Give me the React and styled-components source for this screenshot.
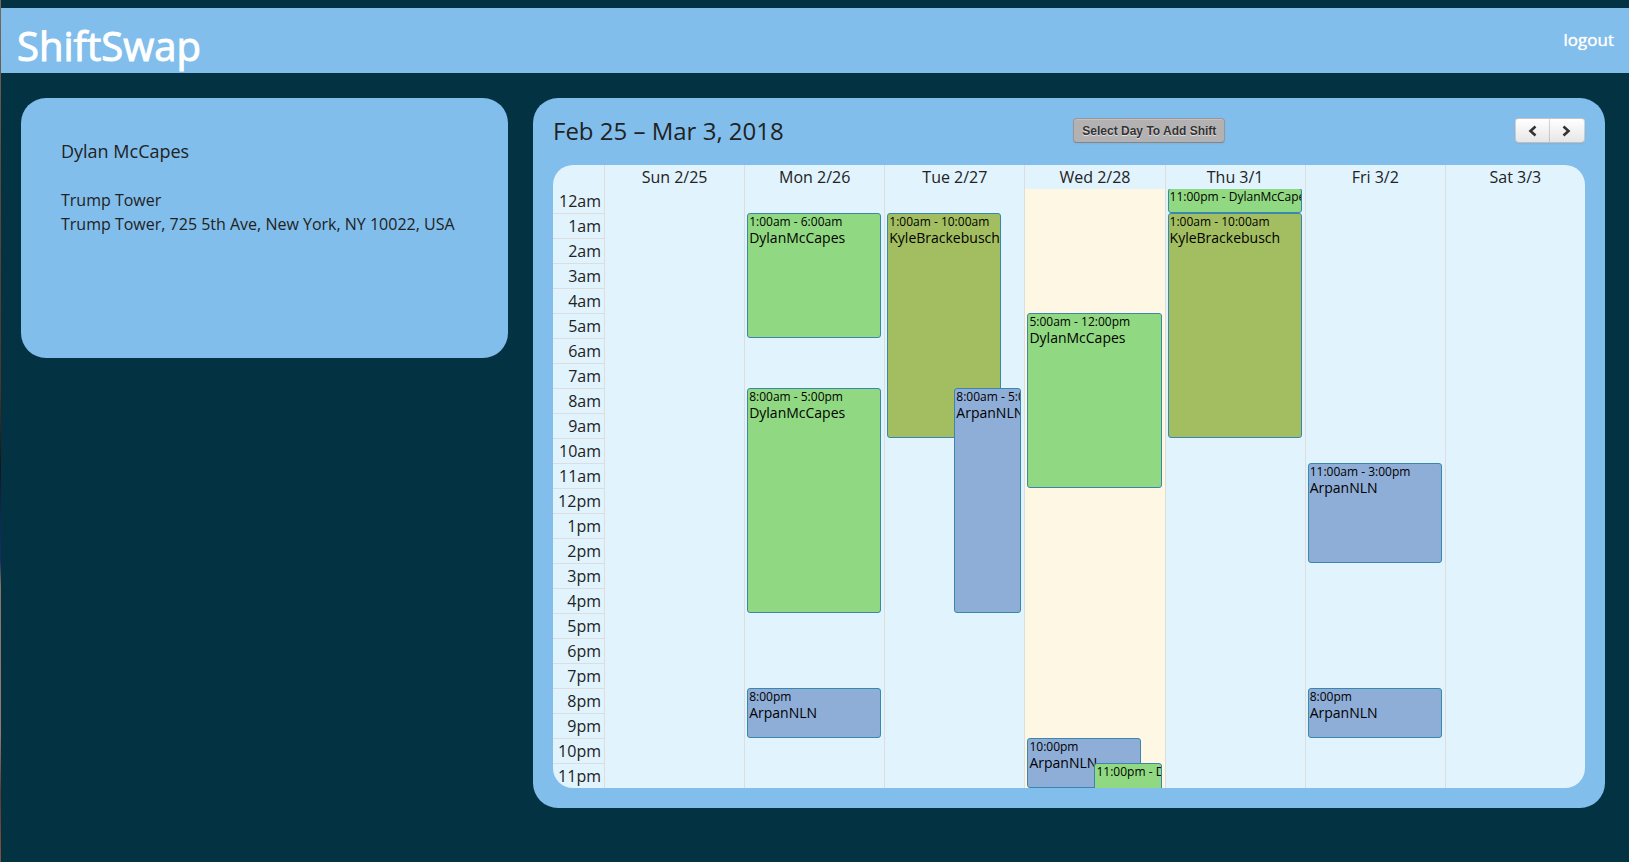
import React from "react";
import styled, { createGlobalStyle } from "styled-components";

const HOUR = 25;

const colors = {
  page: "#033242",
  panel: "#81beec",
  grid: "#e1f3fd",
  today: "#fef7e3",
  line: "#dddddd",
  text: "#222222",
  dylan: "#90d982",
  kyle: "#a3be60",
  arpan: "#8eadd7",
};

const GlobalStyle = createGlobalStyle`
  *, *::before, *::after { box-sizing: border-box; }
  body {
    margin: 0;
    background: ${colors.page};
    color: ${colors.text};
    font: 16px/24px "Open Sans", "Noto Sans", sans-serif;
  }
`;

const Page = styled.div`
  min-height: 100vh;
  padding-top: 8px;
  border-left: 1px solid;
  border-image: linear-gradient(
    #77695c, #5d4a3e 20%, #4b3528 45%, #15151a 54%, #14265a 60%, #1a2a66 65%,
    #8a7465 68%, #9a7a68 85%, #5a3a30 92%, #84523f
  ) 1;
`;

const Header = styled.header`
  display: flex;
  align-items: center;
  justify-content: space-between;
  height: 65px;
  padding: 0 15px 2px 16px;
  background: ${colors.panel};
  color: #ffffff;
`;

const Brand = styled.h1`
  margin: 12px 0 0;
  font-size: 40px;
  line-height: 48px;
  font-weight: 400;
  -webkit-text-stroke: 1px #ffffff;
`;

const LogoutLink = styled.a`
  color: inherit;
  font-size: 17px;
  text-decoration: none;
  text-shadow: 0 0 1px #ffffff;
`;

const Main = styled.main`
  display: grid;
  grid-template-columns: 487fr 1072fr;
  align-items: start;
  gap: 25px;
  padding: 25px 24px 54px 20px;
`;

const Panel = styled.section`
  min-width: 0;
  border-radius: 25px;
  background: ${colors.panel};
`;

const ProfilePanel = styled(Panel)`
  min-height: 260px;
  padding: 41px 40px;
`;

const ProfileName = styled.h2`
  margin: 0 0 24px;
  font-size: 18px;
  line-height: 25px;
  font-weight: 400;
`;

const ProfileLine = styled.p`
  margin: 0;
`;

const CalendarPanel = styled(Panel)`
  padding: 20px;
`;

const Toolbar = styled.div`
  display: flex;
  align-items: flex-start;
  justify-content: space-between;
  height: 47px;
`;

const RangeTitle = styled.h2`
  margin: 0;
  font-size: 24px;
  line-height: 26px;
  font-weight: 400;
`;

const ToolButton = styled.button`
  display: inline-flex;
  align-items: center;
  justify-content: center;
  height: 25px;
  padding: 0 8px;
  border: 1px solid rgba(0, 0, 0, 0.15);
  border-bottom-color: rgba(0, 0, 0, 0.25);
  border-radius: 4px;
  background: ${(p) => (p.$muted ? "#b3b1b2" : "linear-gradient(#ffffff, #e6e6e6)")};
  color: #333333;
  font: bold 12px/16px "Liberation Sans", Arial, sans-serif;
  text-shadow: 0 1px 1px rgba(255, 255, 255, 0.75);
  box-shadow: inset 0 1px 0 rgba(255, 255, 255, 0.2), 0 1px 2px rgba(0, 0, 0, 0.05);
  cursor: pointer;
`;

const NavGroup = styled.div`
  display: flex;
`;

const NavButton = styled(ToolButton)`
  width: 36px;
  padding: 0;

  &:first-child { width: 35px; border-radius: 4px 0 0 4px; }
  &:last-child { margin-left: -1px; border-radius: 0 4px 4px 0; }
`;

const Calendar = styled.div`
  display: grid;
  grid-template-columns: 51px minmax(0, 1fr);
  overflow: hidden;
  border-radius: 20px;
  background: ${colors.grid};
`;

const Axis = styled.div`
  padding-top: 24px;
`;

const AxisSlot = styled.div`
  height: ${HOUR}px;
  padding-right: 3px;
  border-top: 1px solid ${colors.line};
  text-align: right;

  &:first-child { height: ${HOUR - 1}px; border-top: 0; }
`;

const Days = styled.div`
  display: grid;
  grid-template-columns: repeat(7, minmax(0, 1fr));
`;

const Day = styled.div`
  display: flex;
  flex-direction: column;
  border-left: 1px solid ${colors.line};
`;

const DayName = styled.div`
  height: 24px;
  text-align: center;
`;

const DayBody = styled.div`
  flex: 1;
  padding: 0 3px 0 2px;
  overflow: hidden;
  background: ${(p) => (p.$today ? colors.today : "transparent")};
`;

const ShiftLayer = styled.div`
  position: relative;
  height: 100%;
`;

const Shift = styled.article`
  position: absolute;
  top: ${(p) => p.$start * HOUR - 1}px;
  left: ${(p) => (p.$half ? "50%" : "0")};
  width: ${(p) => (p.$half ? "50%" : p.$behind ? "85%" : "100%")};
  height: ${(p) => p.$hours * HOUR}px;
  padding: 0 1px;
  overflow: hidden;
  border: 1px solid #3a87ad;
  border-radius: 3px;
  background: ${(p) => colors[p.$who]};
  color: #000000;
  font-size: 14px;
  line-height: 16px;
  white-space: nowrap;
`;

const ShiftTime = styled.div`
  font-size: 12px;
`;

const names = { dylan: "DylanMcCapes", kyle: "KyleBrackebusch", arpan: "ArpanNLN" };

const days = [
  { label: "Sun 2/25", shifts: [] },
  {
    label: "Mon 2/26",
    shifts: [
      { start: 1, hours: 5, time: "1:00am - 6:00am", who: "dylan" },
      { start: 8, hours: 9, time: "8:00am - 5:00pm", who: "dylan" },
      { start: 20, hours: 2, time: "8:00pm", who: "arpan" },
    ],
  },
  {
    label: "Tue 2/27",
    shifts: [
      { start: 1, hours: 9, time: "1:00am - 10:00am", who: "kyle", behind: true },
      { start: 8, hours: 9, time: "8:00am - 5:00pm", who: "arpan", half: true },
    ],
  },
  {
    label: "Wed 2/28",
    today: true,
    shifts: [
      { start: 5, hours: 7, time: "5:00am - 12:00pm", who: "dylan" },
      { start: 22, hours: 2, time: "10:00pm", who: "arpan", behind: true },
      { start: 23, hours: 2, time: "11:00pm", who: "dylan", half: true, inline: true },
    ],
  },
  {
    label: "Thu 3/1",
    shifts: [
      { start: 0, hours: 1, time: "11:00pm", who: "dylan", inline: true },
      { start: 1, hours: 9, time: "1:00am - 10:00am", who: "kyle" },
    ],
  },
  {
    label: "Fri 3/2",
    shifts: [
      { start: 11, hours: 4, time: "11:00am - 3:00pm", who: "arpan" },
      { start: 20, hours: 2, time: "8:00pm", who: "arpan" },
    ],
  },
  { label: "Sat 3/3", shifts: [] },
];

const hours = Array.from({ length: 24 }, (_, h) => `${h % 12 || 12}${h < 12 ? "am" : "pm"}`);

function Chevron({ direction }) {
  return (
    <svg width="9" height="12" viewBox="0 0 9 12" fill="none" stroke="#333333" strokeWidth="2.6" aria-hidden="true">
      <path d={direction === "left" ? "M7.5 1.5 2.5 6 7.5 10.5" : "M1.5 1.5 6.5 6 1.5 10.5"} />
    </svg>
  );
}

function ShiftCard({ shift }) {
  const { start, hours: length, time, who, half, behind, inline } = shift;
  return (
    <Shift $start={start} $hours={length} $who={who} $half={half} $behind={behind}>
      {inline ? (
        <ShiftTime>{time} - {names[who]}</ShiftTime>
      ) : (
        <>
          <ShiftTime>{time}</ShiftTime>
          <div>{names[who]}</div>
        </>
      )}
    </Shift>
  );
}

export default function App() {
  return (
    <Page>
      <GlobalStyle />
      <Header>
        <Brand>ShiftSwap</Brand>
        <LogoutLink href="#logout">logout</LogoutLink>
      </Header>
      <Main>
        <ProfilePanel>
          <ProfileName>Dylan McCapes</ProfileName>
          <ProfileLine>Trump Tower</ProfileLine>
          <ProfileLine>Trump Tower, 725 5th Ave, New York, NY 10022, USA</ProfileLine>
        </ProfilePanel>
        <CalendarPanel>
          <Toolbar>
            <RangeTitle>Feb 25 – Mar 3, 2018</RangeTitle>
            <ToolButton type="button" $muted>Select Day To Add Shift</ToolButton>
            <NavGroup>
              <NavButton type="button" aria-label="Previous week"><Chevron direction="left" /></NavButton>
              <NavButton type="button" aria-label="Next week"><Chevron direction="right" /></NavButton>
            </NavGroup>
          </Toolbar>
          <Calendar>
            <Axis>
              {hours.map((label) => <AxisSlot key={label}>{label}</AxisSlot>)}
            </Axis>
            <Days>
              {days.map((day) => (
                <Day key={day.label}>
                  <DayName>{day.label}</DayName>
                  <DayBody $today={day.today}>
                    <ShiftLayer>
                      {day.shifts.map((shift) => <ShiftCard key={shift.start} shift={shift} />)}
                    </ShiftLayer>
                  </DayBody>
                </Day>
              ))}
            </Days>
          </Calendar>
        </CalendarPanel>
      </Main>
    </Page>
  );
}
